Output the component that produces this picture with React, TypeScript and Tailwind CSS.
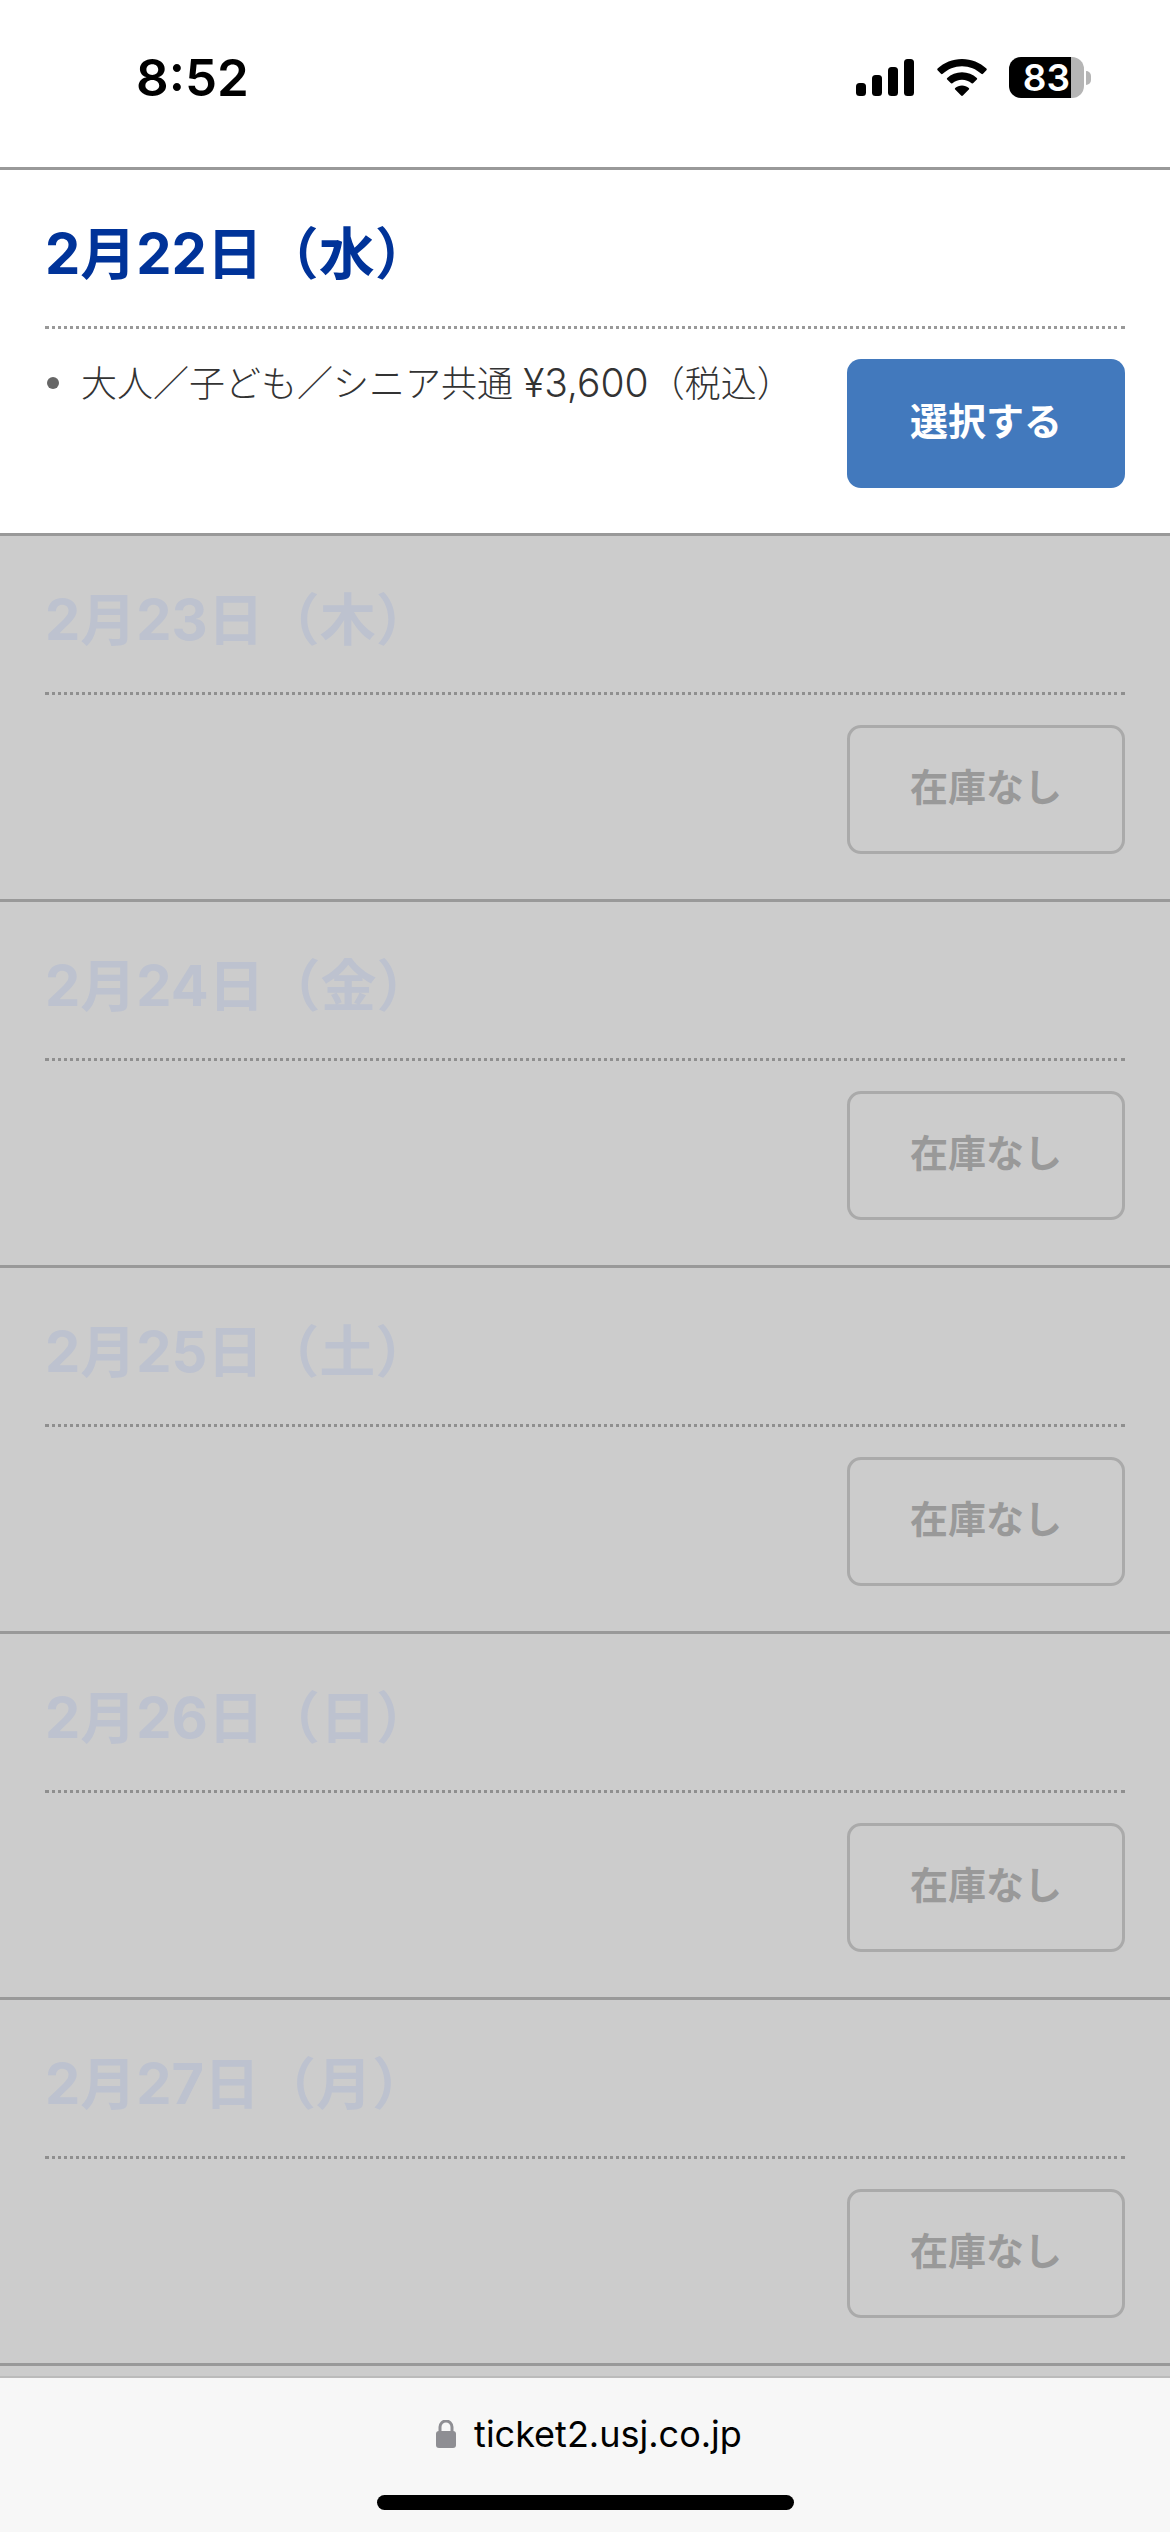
const days = [
  { id: 23, label: "2月23日（木）" },
  { id: 24, label: "2月24日（金）" },
  { id: 25, label: "2月25日（土）" },
  { id: 26, label: "2月26日（日）" },
  { id: 27, label: "2月27日（月）" },
];

const StatusIcons = () => (
  <div className="flex items-center">
    {/* SIGNAL */}
    <svg width="58" height="37" viewBox="0 0 58 37" className="mr-[23px]">
      <rect x="0" y="24" width="10" height="13" rx="3.5" fill="#000" />
      <rect x="16" y="16" width="10" height="21" rx="3.5" fill="#000" />
      <rect x="32" y="8" width="10" height="29" rx="3.5" fill="#000" />
      <rect x="48" y="0" width="10" height="37" rx="3.5" fill="#000" />
    </svg>
    {/* WIFI */}
    <svg width="50" height="37" viewBox="0 0 50 37" className="mr-[22px]">
      <path
        d="M25 0C15.5 0 7 3.6 0.6 9.6c-.5.5-.5 1.2 0 1.7l3.4 3.5c.5.5 1.2.5 1.7 0C10.8 10 17.6 7.2 25 7.2s14.2 2.8 19.3 7.6c.5.5 1.2.5 1.7 0l3.4-3.5c.5-.5.5-1.2 0-1.7C43 3.6 34.5 0 25 0z"
        fill="#000"
      />
      <path
        d="M25 13.2c-5.7 0-10.9 2.2-14.8 5.7-.5.5-.5 1.2 0 1.7l3.5 3.5c.5.5 1.1.5 1.7.1 2.6-2.2 6-3.5 9.6-3.5s7 1.3 9.6 3.5c.6.4 1.2.4 1.7-.1l3.5-3.5c.5-.5.5-1.2 0-1.7-3.9-3.5-9.1-5.7-14.8-5.7z"
        fill="#000"
      />
      <path
        d="M25 26.4c-2.6 0-5 1-6.8 2.5-.5.5-.5 1.2 0 1.7l5.9 5.9c.5.5 1.3.5 1.8 0l5.9-5.9c.5-.5.5-1.2 0-1.7-1.8-1.5-4.2-2.5-6.8-2.5z"
        fill="#000"
      />
    </svg>
    {/* BATTERY */}
    <div className="flex items-center">
      <div className="flex h-[41px] w-[62px] items-center justify-end rounded-l-[12px] bg-black pr-[1px]">
        <span className="text-[37px] font-semibold leading-[41px] text-white">83</span>
      </div>
      <div className="h-[41px] w-[13px] rounded-r-[12px] bg-[#b5b5b5]" />
      <div className="ml-[2px] h-[14px] w-[5px] rounded-r-full bg-[#b5b5b5]" />
    </div>
  </div>
);

const App = () => {
  return (
    <div className="flex h-[2532px] w-[1170px] flex-col overflow-hidden bg-white font-['Inter','Noto_Sans_CJK_JP',sans-serif]">
      {/* STATUS BAR */}
      <div className="flex h-[167px] shrink-0 items-start justify-between pl-[136px] pr-[79px] pt-[57px]">
        <span className="text-[51px] font-semibold leading-[42px] text-black">8:52</span>
        <StatusIcons />
      </div>

      <div className="flex-1 overflow-hidden bg-[#cccccc]">
        {/* OPEN DAY */}
        <div className="h-[366px] border-t-[3px] border-[#999999] bg-white px-[45px]">
          <h2 className="h-[159px] border-b-[3px] border-dotted border-[#999999] pt-[44px] text-[56px] font-bold leading-[80px] text-[#003399]">
            2月22日（水）
          </h2>
          <div className="flex justify-between pt-[30px]">
            <div className="flex items-start gap-[22px] pl-[2px] text-[36px] font-light leading-[48px] text-[#333333]">
              <span className="mt-[18px] h-[12px] w-[12px] rounded-full bg-[#666666]" />
              <p className="whitespace-nowrap">
                大人／子ども／シニア共通 <span className="text-[39px]">¥3,600</span>（税込）
              </p>
            </div>
            <button className="h-[129px] w-[278px] rounded-[14px] bg-[#4279bd] pb-[5px] text-[38px] font-bold text-white">
              選択する
            </button>
          </div>
        </div>

        {/* SOLD OUT DAYS */}
        {days.map((day) => (
          <div key={day.id} className="h-[366px] border-t-[3px] border-[#999999] px-[45px]">
            <h2 className="h-[159px] border-b-[3px] border-dotted border-[#8f8f8f] pt-[44px] text-[56px] font-bold leading-[80px] text-[#bdc2cf]">
              {day.label}
            </h2>
            <div className="flex justify-end pt-[30px]">
              <button className="h-[129px] w-[278px] rounded-[14px] border-[3px] border-[#aaaaaa] pb-[5px] text-[38px] font-bold text-[#999999]">
                在庫なし
              </button>
            </div>
          </div>
        ))}
        <div className="border-t-[3px] border-[#999999]" />
      </div>

      {/* URL BAR */}
      <div className="flex h-[156px] shrink-0 flex-col items-center border-t-2 border-[#bbbbbb] bg-[#f7f7f7]">
        <div className="ml-[8px] mt-[31px] flex items-center gap-[18px]">
          <svg width="20" height="28" viewBox="0 0 20 28">
            <path
              d="M4 13V7a6 6 0 0 1 12 0v6"
              fill="none"
              stroke="#8e8e93"
              strokeWidth="3"
            />
            <rect x="0" y="11" width="20" height="17" rx="3" fill="#8e8e93" />
          </svg>
          <span className="text-[36px] leading-[50px] text-black">ticket2.usj.co.jp</span>
        </div>
        <div className="mt-[36px] h-[15px] w-[417px] rounded-full bg-black" />
      </div>
    </div>
  );
};

export default App;
